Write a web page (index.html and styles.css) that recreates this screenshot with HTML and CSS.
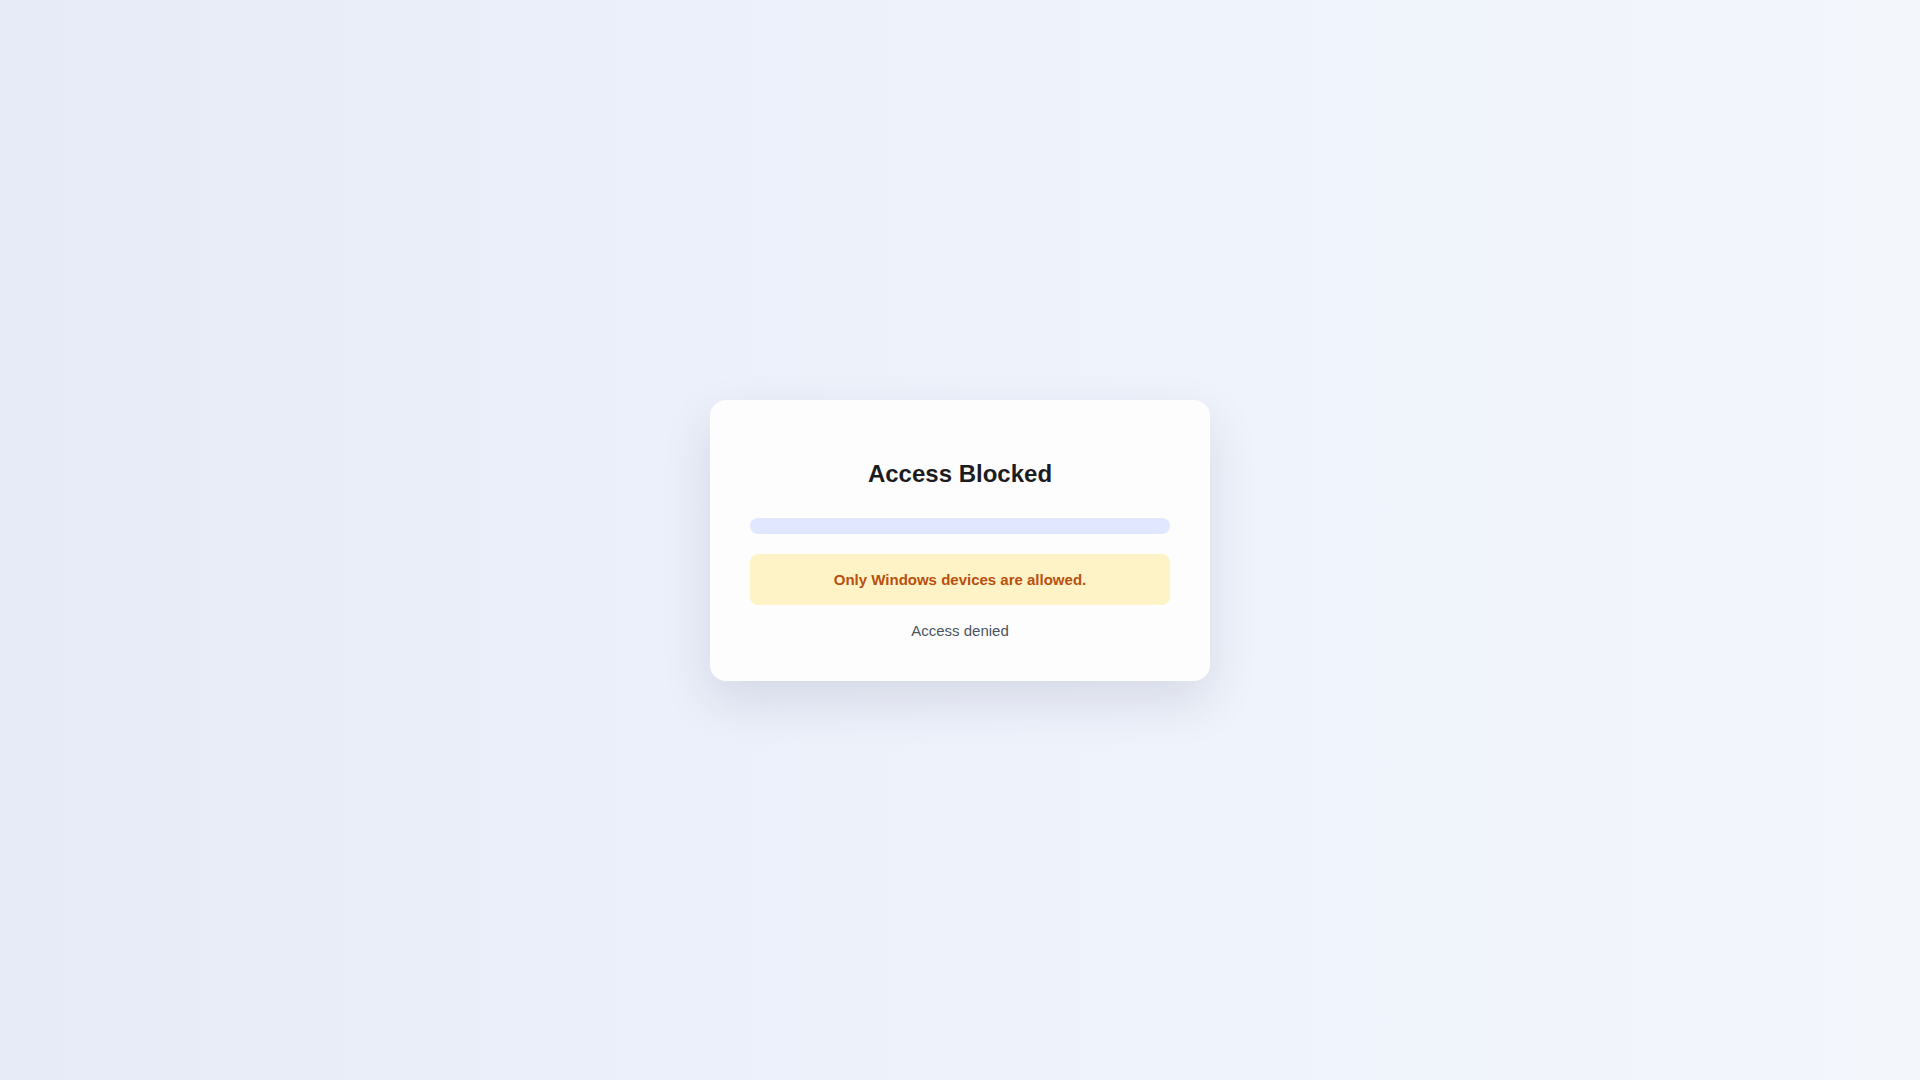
FILE: index.html
```html
<!DOCTYPE html>
<html lang="en">

<head>
    <meta charset="UTF-8">
    <meta name="viewport" content="width=device-width, initial-scale=1.0">
    <title>Access Blocked</title>
    <link rel="stylesheet" href="styles.css">
</head>

<body>
    <div class="card">
        <h1>Access Blocked</h1>
        <div class="progress"></div>
        <div class="warning">Only Windows devices are allowed.</div>
        <p class="status">Access denied</p>
    </div>
</body>

</html>
```

FILE: styles.css
```css
html,
body {
    height: 100%;
}

body {
    margin: 0;
    padding: 0;
    display: flex;
    justify-content: center;
    align-items: center;
    font-family: "Liberation Sans", Arial, Helvetica, sans-serif;
    background: linear-gradient(90deg, #e6ebf7 0%, #eef2fb 50%, #f3f6fb 100%);
}

.card {
    width: 420px;
    padding: 40px;
    background-color: #fdfdfe;
    border-radius: 16px;
    box-shadow: 0 20px 50px rgba(30, 41, 80, 0.12);
    text-align: center;
}

h1 {
    margin: 19px 0 30px;
    font-size: 24px;
    line-height: 29px;
    font-weight: 700;
    color: #1c1c1e;
}

.progress {
    height: 16px;
    border-radius: 8px;
    background-color: #e0e7fe;
}

.warning {
    margin-top: 20px;
    padding: 16px;
    border-radius: 8px;
    background-color: #fef3c7;
    color: #b8500e;
    font-size: 15px;
    line-height: 19px;
    font-weight: 700;
}

.status {
    margin: 15px 0 0;
    font-size: 15px;
    line-height: 21px;
    color: #4b5563;
}
```
